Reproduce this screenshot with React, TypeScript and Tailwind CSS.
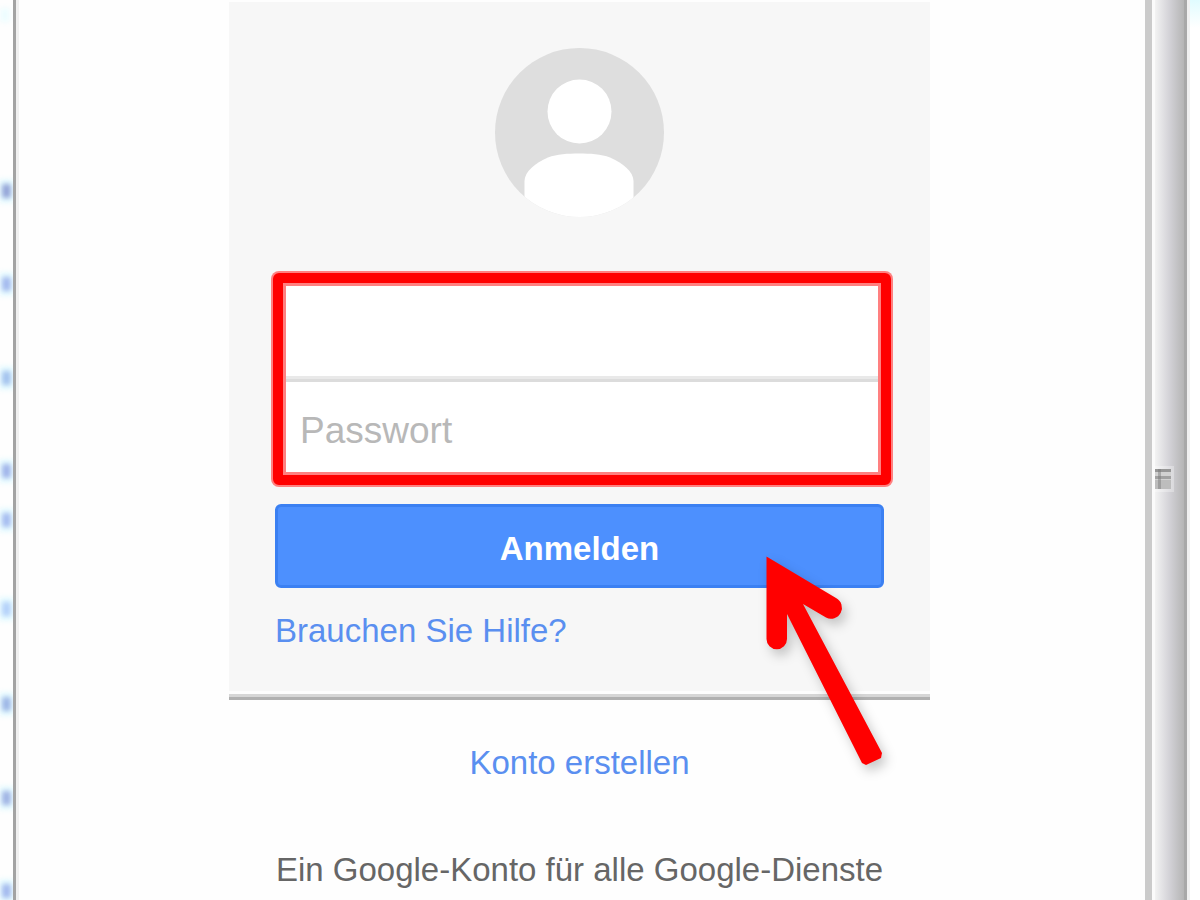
import React from 'react';

// Links of the page behind the dialog, cut off by its left edge
const sideMarks = [
  { y: 191, color: '#94a5d8' },
  { y: 284, color: '#a3b9ee' },
  { y: 378, color: '#a3c2ee' },
  { y: 471, color: '#a0b4ea' },
  { y: 520, color: '#a6bcf0' },
  { y: 609, color: '#b4d0fa' },
  { y: 704, color: '#9db6e6' },
  { y: 798, color: '#9fb3e4' },
  { y: 891, color: '#a3b9ee' }
];

const SideStrip: React.FC = () => (
  <div className="w-[13px] shrink-0 overflow-hidden" aria-hidden="true">
    <svg className="block" width="16" height="900" viewBox="0 0 16 900">
      <defs>
        <filter id="soft" x="-100%" y="-100%" width="300%" height="300%" colorInterpolationFilters="sRGB">
          <feGaussianBlur stdDeviation="2.6" />
        </filter>
      </defs>
      <rect x="0" y="8" width="10" height="14" fill="#eefdff" filter="url(#soft)" />
      {sideMarks.map((mark) => (
        <g key={mark.y}>
          <rect x="-1" y={mark.y - 12} width="15" height="24" fill="#e6fbff" filter="url(#soft)" />
          <rect x="2" y={mark.y - 7} width="9" height="14" rx="2" fill={mark.color} filter="url(#soft)" />
        </g>
      ))}
    </svg>
  </div>
);

const Avatar: React.FC = () => (
  <svg className="mx-auto block" width="169" height="169" viewBox="0 0 169 169" aria-hidden="true">
    <defs>
      <clipPath id="avatar-circle">
        <circle cx="84.5" cy="84.5" r="84.5" />
      </clipPath>
    </defs>
    <g clipPath="url(#avatar-circle)">
      <rect width="169" height="169" fill="#dedede" />
      <circle cx="84.5" cy="63.5" r="32" fill="#fff" />
      <path
        d="M29.5 169V133C29.5 124 40 115 53 109.500C62 106 73 105.500 84 105.500S106 106 115 109.500C128 115 138.500 124 138.500 133V169Z"
        fill="#fff"
      />
    </g>
  </svg>
);

const Arrow: React.FC = () => (
  <svg
    className="pointer-events-none absolute top-[554px] left-[536px] overflow-visible drop-shadow-[4px_6px_6px_rgba(0,0,0,0.22)]"
    width="120"
    height="212"
    viewBox="0 0 120 212"
    aria-hidden="true"
  >
    <path
      d="M1.500 0.500L71 42A10.500 10.500 0 0 1 61 61.500L38 48L117 197L116 202L101 209L97 207L22 58V83A10.250 10.250 0 0 1 1.500 83Z"
      fill="#f00"
    />
  </svg>
);

const Scrollbar: React.FC = () => (
  <div className="flex w-[55px] shrink-0" aria-hidden="true">
    <div className="w-[7px] bg-[#cbcbcb]" />
    <div className="w-[3px] bg-[#fbfbfb]" />
    <div className="flex w-[29px] items-center bg-linear-to-r from-[#f3f3f3] via-[#d3d2d7] to-[#b5b5b5] pt-[58px]">
      <svg className="overflow-visible" width="16" height="20" viewBox="0 0 16 20">
        <rect x="-1" y="-3" width="20" height="26" fill="#fff" opacity="0.3" />
        <rect width="16" height="20" fill="#d2d2d2" />
        <rect width="16" height="3" fill="#979797" />
        <rect y="7" width="16" height="3" fill="#a2a2a2" />
        <rect y="11" width="16" height="9" fill="#bdbdbd" />
        <rect x="3" width="3" height="20" fill="#777" opacity="0.45" />
      </svg>
    </div>
    <div className="w-[3px] bg-[#a8a8a8]" />
    <div className="w-[3px] bg-[#f0f0f0]" />
    <div className="w-2.5 bg-linear-to-b from-[#e0fcff] to-white to-[28px]" />
  </div>
);

const LoginCard: React.FC = () => (
  <form
    className="w-full max-w-[701px] border-b-3 border-[#b0b0b0] bg-[#f7f7f7] pt-[46px] shadow-[inset_0_-3px_0_#d6d6d6,inset_0_-6px_0_#fdfdfd]"
    onSubmit={(e) => e.preventDefault()}
  >
    <Avatar />

    {/* Credentials */}
    <div className="mt-14 mr-[39px] ml-11 rounded-md border-10 border-[#f00] bg-white shadow-[0_0_0_2px_#ff8080,inset_0_0_0_3px_#ff8080]">
      <input
        type="email"
        aria-label="E-Mail"
        className="block h-[93px] w-full px-[17px] text-[37px] text-[#404040] outline-none"
      />
      <div className="mx-[3px] h-1.5 border-b-3 border-[#dcdcdc] bg-[#e9e9e9]" />
      <input
        type="password"
        aria-label="Passwort"
        placeholder="Passwort"
        className="block h-[93px] w-full px-[17px] pt-1 text-[37px] text-[#404040] outline-none placeholder:text-[#b8b8b8]"
      />
    </div>

    <div className="mt-[19px] mr-[46px] ml-[46px]">
      <button
        type="submit"
        className="block h-[84px] w-full rounded-md border-3 border-[#3b80f2] bg-[#4d90fe] pt-1.5 text-[33px] font-bold text-white"
      >
        Anmelden
      </button>
      <a href="#" className="mt-6 mb-[47px] inline-block text-[33px] leading-[38px] text-[#5a8ff0]">
        Brauchen Sie Hilfe?
      </a>
    </div>
  </form>
);

export default function App() {
  return (
    <div className="flex min-h-screen bg-[#fefefe] font-['Liberation_Sans',Arial,sans-serif]">
      <SideStrip />
      <main className="flex flex-1 flex-col items-center border-l-3 border-[#a3a3a3] pt-0.5 pr-0.5 shadow-[inset_3px_0_0_#f0f0f0]">
        <div className="relative flex w-full max-w-[701px] flex-col items-center">
          <LoginCard />
          <Arrow />
          <a href="#" className="mt-11 text-[33px] leading-[38px] text-[#5a8ff0]">
            Konto erstellen
          </a>
          <p className="mt-[69px] text-[33px] leading-[38px] whitespace-nowrap text-[#666]">
            Ein Google-Konto für alle Google-Dienste
          </p>
        </div>
      </main>
      <Scrollbar />
    </div>
  );
}
